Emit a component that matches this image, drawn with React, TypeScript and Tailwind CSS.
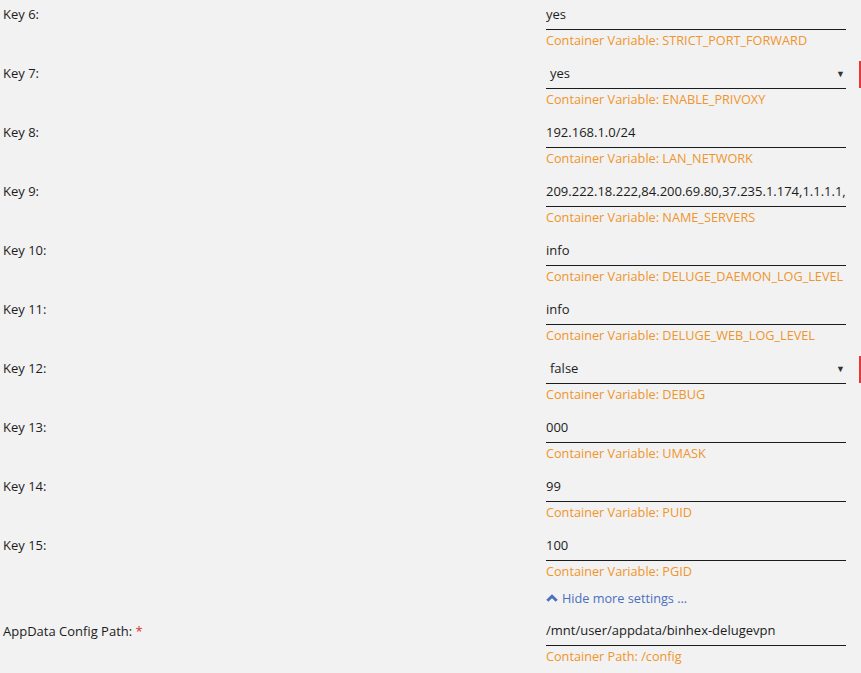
import { ReactNode } from 'react';

type Row = {
  label: string;
  value: string;
  variable: string;
  select?: boolean;
};

const rows: Row[] = [
  { label: 'Key 6:', value: 'yes', variable: 'STRICT_PORT_FORWARD' },
  { label: 'Key 7:', value: 'yes', variable: 'ENABLE_PRIVOXY', select: true },
  { label: 'Key 8:', value: '192.168.1.0/24', variable: 'LAN_NETWORK' },
  {
    label: 'Key 9:',
    value: '209.222.18.222,84.200.69.80,37.235.1.174,1.1.1.1,208.67.222.222,208.67.220.220',
    variable: 'NAME_SERVERS',
  },
  { label: 'Key 10:', value: 'info', variable: 'DELUGE_DAEMON_LOG_LEVEL' },
  { label: 'Key 11:', value: 'info', variable: 'DELUGE_WEB_LOG_LEVEL' },
  { label: 'Key 12:', value: 'false', variable: 'DEBUG', select: true },
  { label: 'Key 13:', value: '000', variable: 'UMASK' },
  { label: 'Key 14:', value: '99', variable: 'PUID' },
  { label: 'Key 15:', value: '100', variable: 'PGID' },
];

function Field({
  label,
  children,
  note,
  extra,
}: {
  label: ReactNode;
  children: ReactNode;
  note: string;
  extra?: ReactNode;
}) {
  return (
    <div className="flex mb-[9px]">
      <div className="w-[546px] pl-[3px] text-[13px] leading-[29px] text-[#1c1c1c]">{label}</div>
      <div className="w-[300px]">
        {children}
        <div className="text-[12.7px] leading-[20px] text-[#f0952b] whitespace-nowrap">{note}</div>
      </div>
      {extra}
    </div>
  );
}

export default function App() {
  return (
    <div
      className="min-h-screen w-full bg-[#f2f2f2] overflow-hidden"
      style={{ fontFamily: '"Open Sans", "Noto Sans", sans-serif' }}
    >
      {rows.map((r, idx) => (
        <Field
          key={idx}
          label={r.label}
          note={`Container Variable: ${r.variable}`}
          extra={r.select ? <div className="ml-[13px] mt-[2px] w-[2px] h-[27px] bg-[#e03a3a]" /> : null}
        >
          {r.select ? (
            <div className="h-[30px] border-b border-[#1c1c1c] flex items-center justify-between pl-[4px] pr-[1px] text-[13px] text-[#1c1c1c]">
              <span>{r.value}</span>
              <span className="text-[9px] text-[#333]">▼</span>
            </div>
          ) : (
            <div className="h-[30px] border-b border-[#1c1c1c] flex items-center text-[13px] text-[#1c1c1c] whitespace-nowrap overflow-hidden">
              {r.value}
            </div>
          )}
        </Field>
      ))}

      <div className="flex mt-[-1px] mb-[10px]">
        <div className="w-[546px]" />
        <a className="flex items-center gap-[4px] text-[12.7px] leading-[18px] text-[#4a6fc0] cursor-pointer">
          <svg width="12" height="8" viewBox="0 0 12 8" fill="none">
            <path d="M1.3 6.8 L6 2.2 L10.7 6.8" stroke="#4a6fc0" strokeWidth="2.8" />
          </svg>
          Hide more settings ...
        </a>
      </div>

      <Field
        label={
          <span>
            AppData Config Path: <span className="text-[#e22828]">*</span>
          </span>
        }
        note="Container Path: /config"
      >
        <div className="h-[29px] border-b border-[#1c1c1c] flex items-center text-[13px] text-[#1c1c1c] whitespace-nowrap overflow-hidden">
          /mnt/user/appdata/binhex-delugevpn
        </div>
      </Field>
    </div>
  );
}
